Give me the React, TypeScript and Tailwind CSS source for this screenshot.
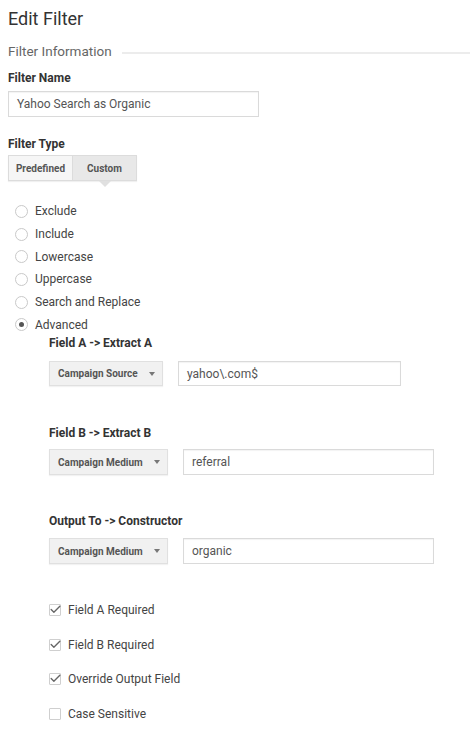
import { Check } from "lucide-react";

const RADIOS = ["Exclude", "Include", "Lowercase", "Uppercase", "Search and Replace", "Advanced"];

interface FieldRow {
  label: string;
  select: string;
  value: string;
  selectW: string;
  inputW: string;
  gap: string;
}

const FIELDS: FieldRow[] = [
  { label: "Field A -> Extract A", select: "Campaign Source", value: "yahoo\\.com$", selectW: "w-[114px] h-[25px]", inputW: "w-[223px] h-[25px]", gap: "mt-[11px]" },
  { label: "Field B -> Extract B", select: "Campaign Medium", value: "referral", selectW: "w-[119px] h-[26px]", inputW: "w-[251px] h-[26px]", gap: "mt-[9px]" },
  { label: "Output To -> Constructor", select: "Campaign Medium", value: "organic", selectW: "w-[119px] h-[26px]", inputW: "w-[251px] h-[26px]", gap: "mt-[10px]" },
];

const CHECKS = [
  { label: "Field A Required", on: true },
  { label: "Field B Required", on: true },
  { label: "Override Output Field", on: true },
  { label: "Case Sensitive", on: false },
];

function Radio({ label, on }: { label: string; on: boolean }) {
  return (
    <div className="flex items-center h-[22.7px]">
      <span className="ml-[7px] w-[13px] h-[13px] rounded-full border border-[#c9c9c9] bg-white flex items-center justify-center">
        {on && <span className="w-[5px] h-[5px] rounded-full bg-[#555]" />}
      </span>
      <span className="ml-[7px] text-[12px] text-[#444]">{label}</span>
    </div>
  );
}

export default function App() {
  return (
    <div className="w-[470px] h-[732px] bg-white pl-2 font-['Roboto',sans-serif] overflow-hidden">
      <h1 className="pt-2 text-[18px] leading-[22px] text-[#333]">Edit Filter</h1>

      <div className="mt-[13px] flex items-center">
        <span className="text-[13.5px] leading-[16px] text-[#666]">Filter Information</span>
        <div className="ml-[10px] mt-[4px] flex-1 h-[2px] bg-[#ececec]" />
      </div>

      <div className="mt-[13px] text-[12px] leading-[13px] font-bold text-[#333]">Filter Name</div>
      <div className="mt-[6px] w-[251px] h-[26px] border border-[#dadada] shadow-[inset_0_1px_1px_rgba(0,0,0,0.05)] flex items-center px-2 text-[12px] text-[#555]">
        Yahoo Search as Organic
      </div>

      <div className="mt-[21px] text-[12px] leading-[13px] font-bold text-[#333]">Filter Type</div>
      <div className="mt-[4px] flex h-[26px] w-[129px] border border-[#dcdcdc] shadow-[0_1px_1px_rgba(0,0,0,0.06)]">
        <div className="w-[64px] bg-[#f6f6f6] flex items-center justify-center text-[10px] font-bold text-[#555] border-r border-[#dcdcdc]">
          Predefined
        </div>
        <div className="relative flex-1 bg-[#e8e8e8] flex items-center justify-center text-[10px] font-bold text-[#555]">
          Custom
          <span className="absolute left-1/2 -translate-x-1/2 top-full mt-[1px] w-0 h-0 border-x-[6px] border-x-transparent border-t-[6px] border-t-[#e0e0e0]" />
        </div>
      </div>

      <div className="mt-[19px]">
        {RADIOS.map((r) => (
          <Radio key={r} label={r} on={r === "Advanced"} />
        ))}
      </div>

      <div className="pl-[41px]">
        {FIELDS.map((f, i) => (
          <div key={f.label} className={i === 0 ? "" : i === 1 ? "mt-[40px]" : "mt-[39px]"}>
            <div className="text-[12px] leading-[14px] font-bold text-[#333]">{f.label}</div>
            <div className={`${f.gap} flex gap-[15px]`}>
              <div className={`${f.selectW} bg-[#f1f1f1] border border-[#e0e0e0] shadow-[0_1px_1px_rgba(0,0,0,0.05)] flex items-center justify-between pl-2 pr-[7px]`}>
                <span className="text-[10px] font-bold text-[#555]">{f.select}</span>
                <span className="w-0 h-0 border-x-[3.5px] border-x-transparent border-t-[4px] border-t-[#777]" />
              </div>
              <div className={`${f.inputW} border border-[#dadada] shadow-[inset_0_1px_1px_rgba(0,0,0,0.05)] flex items-center px-2 text-[12px] text-[#555]`}>
                {f.value}
              </div>
            </div>
          </div>
        ))}

        <div className="mt-[29px]">
          {CHECKS.map((c) => (
            <div key={c.label} className="flex items-center h-[34.5px]">
              <span className="relative w-[12px] h-[12px] border border-[#cfcfcf] bg-white rounded-[1px]">
                {c.on && (
                  <Check className="absolute -left-[1px] -top-[2px] w-[13px] h-[13px] text-[#666]" strokeWidth={2.5} />
                )}
              </span>
              <span className="ml-[7px] text-[12px] text-[#444]">{c.label}</span>
            </div>
          ))}
        </div>
      </div>
    </div>
  );
}
